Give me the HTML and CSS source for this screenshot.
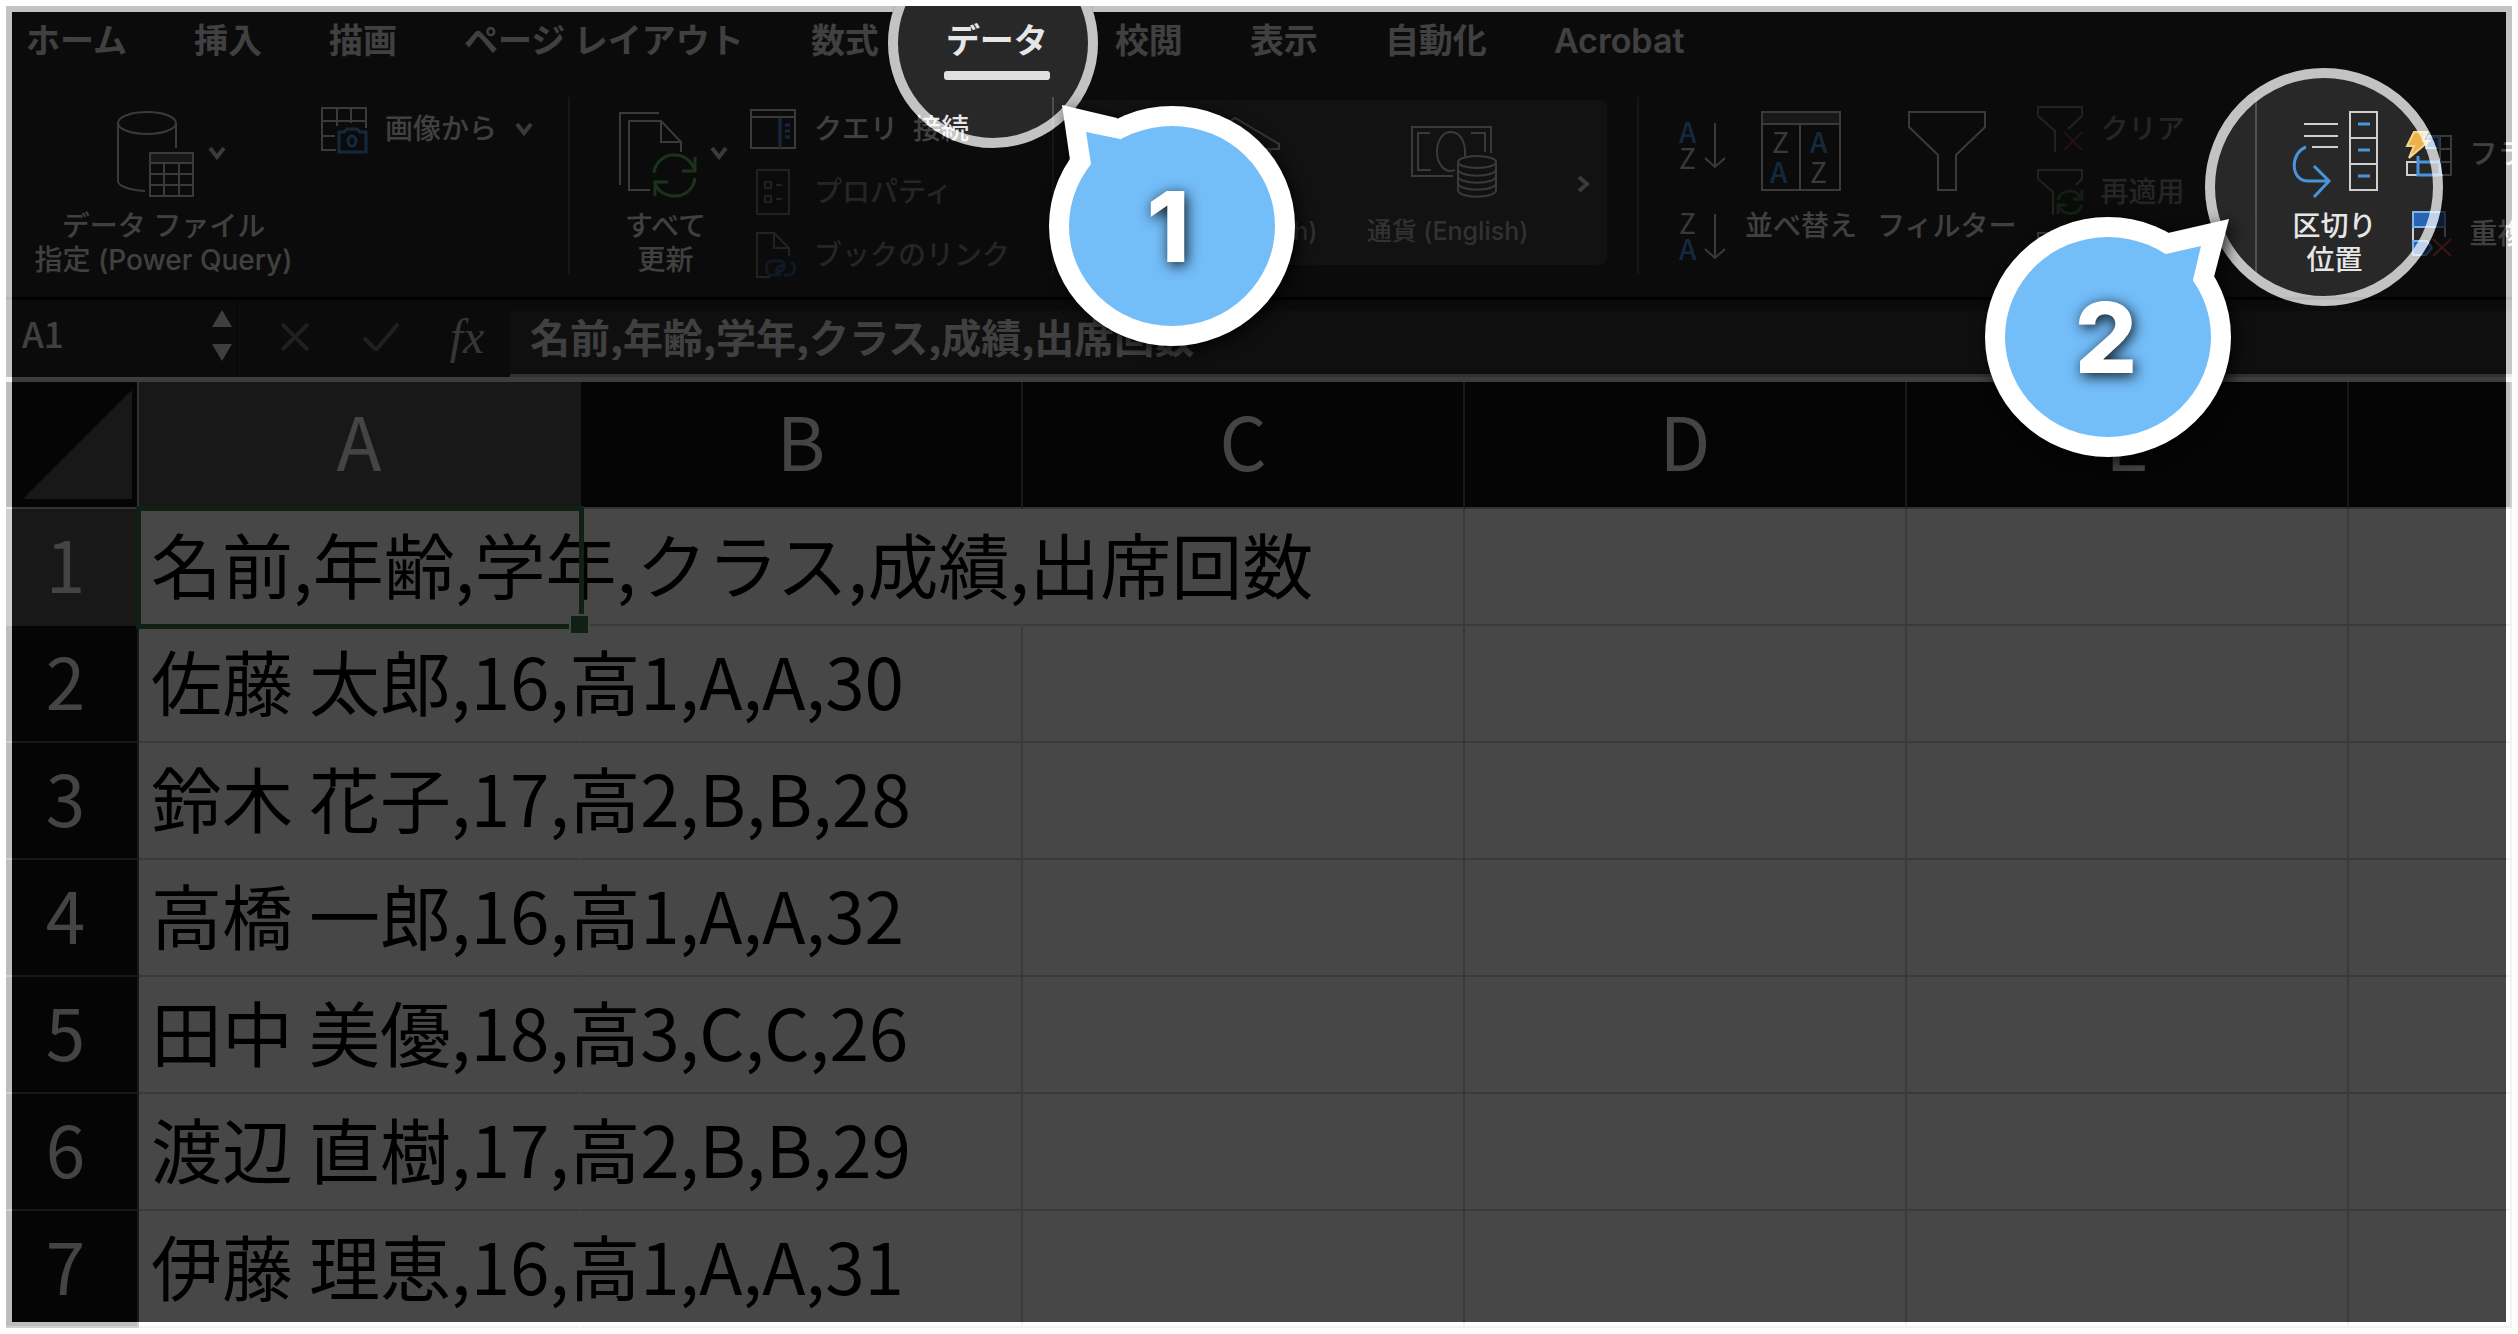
FILE: index.html
```html
<!DOCTYPE html>
<html lang="ja">
<head>
  <meta charset="UTF-8">
  <title>区切り位置</title>
  <link rel="stylesheet" href="styles.css">
</head>
<body>
  <div class="shot">
    <nav class="tabs">
      <button class="tab">ホーム</button>
      <button class="tab">挿入</button>
      <button class="tab">描画</button>
      <button class="tab">ページ レイアウト</button>
      <button class="tab">数式</button>
      <button class="tab active">データ</button>
      <button class="tab">校閲</button>
      <button class="tab">表示</button>
      <button class="tab">自動化</button>
      <button class="tab">Acrobat</button>
    </nav>

    <div class="ribbon">
      <!-- データの取得 -->
      <div class="group group-get">
        <button class="big">
          <span class="big-icon with-arrow">
            <svg width="77" height="86" viewBox="0 0 77 86">
              <ellipse cx="30" cy="12" rx="29" ry="11"/>
              <path d="M1 12V70C1 75 12 79 28 80M59 12V37"/>
              <path class="fill-gray" d="M33 42h43v10H33z"/>
              <path d="M33 52h43v33H33zM47 52v33M62 52v33M33 63h43M33 74h43"/>
            </svg>
            <svg class="arrow" width="18" height="14" viewBox="0 0 18 14"><path d="M2 2l7 9 7-9"/></svg>
          </span>
          <span class="big-label">データ ファイル<br>指定 (Power Query)</span>
        </button>
        <div class="list">
          <button class="small">
            <svg width="46" height="46" viewBox="0 0 46 46">
              <path d="M45 22V2H1v42h14M1 15h44M1 30h13M16 2v18M30 2v15"/>
              <path class="blue" d="M18 26h5l3-3h10l3 3h6v20H18z"/>
              <ellipse class="blue" cx="31" cy="35" rx="4" ry="5"/>
            </svg>
            <span>画像から</span>
            <svg class="arrow" width="18" height="14" viewBox="0 0 18 14"><path d="M2 2l7 9 7-9"/></svg>
          </button>
        </div>
      </div>

      <!-- クエリと接続 -->
      <div class="group group-wide">
        <button class="big">
          <span class="big-icon with-arrow">
            <svg width="77" height="86" viewBox="0 0 77 86">
              <path d="M40 2H1v72"/>
              <path d="M31 79H10V10h32l20 21v10M42 10v21h20"/>
              <path class="green" d="M35 62C36 51 46 43 56 44c10 0 16 6 20 15M76 46v14H63M76 67c-1 11-10 18-20 18S39 80 36 72M36 85V71h13"/>
            </svg>
            <svg class="arrow" width="18" height="14" viewBox="0 0 18 14"><path d="M2 2l7 9 7-9"/></svg>
          </span>
          <span class="big-label">すべて<br>更新</span>
        </button>
        <div class="list">
          <button class="small">
            <svg width="46" height="46" viewBox="0 0 46 46">
              <path d="M1 4h44v38H1zM1 11h44"/>
              <path class="blue" d="M30 12v30M35 19h5M35 25h5M35 31h5"/>
            </svg>
            <span>クエリ  接続</span>
          </button>
          <button class="small" disabled>
            <svg width="46" height="46" viewBox="0 0 46 46">
              <path d="M7 1h32v44H7zM15 13h6v6h-6zM15 27h6v6h-6zM26 16h6M26 30h6"/>
            </svg>
            <span>プロパティ</span>
          </button>
          <button class="small" disabled>
            <svg width="46" height="46" viewBox="0 0 46 46">
              <path d="M20 45H7V1h17l15 15v8M24 1v15h15"/>
              <path class="blue" d="M27 43h-6c-6 0-6-14 0-14h9c6 0 6 10 0 10h-4M34 43h5c7 0 7-12 2-12M31 43c-6 0-6-9 0-9h4"/>
            </svg>
            <span>ブックのリンク</span>
          </button>
        </div>
      </div>

      <!-- データの種類 -->
      <div class="group group-types">
        <div class="gallery">
          <button class="type">
            <svg width="86" height="72" viewBox="0 0 86 72">
              <path d="M1 18L41-8l44 26v5H1zM10 23v36M28 23v36M55 23v36M76 23v36M4 60h78v9H4z"/>
            </svg>
            <span>株式 (English)</span>
          </button>
          <button class="type">
            <svg width="86" height="72" viewBox="-6 0 86 72">
              <path d="M42 50H1V1h79v26M19 7H7v37h13M60 7h14v19"/>
              <path d="M44 44c-10 4-18-6-18-18S32 6 40 6c9 0 15 10 14 24"/>
              <ellipse cx="66" cy="36" rx="19" ry="6"/>
              <path d="M47 36v28c0 9 38 9 38 0V36M47 43c0 9 38 9 38 0M47 50c0 9 38 9 38 0M47 57c0 9 38 9 38 0"/>
            </svg>
            <span>通貨 (English)</span>
          </button>
          <button class="more" aria-label="その他">
            <svg class="arrow" width="12" height="18" viewBox="0 0 12 18"><path d="M2 2l8 7-8 7"/></svg>
          </button>
        </div>
      </div>

      <!-- 並べ替えとフィルター -->
      <div class="group group-sort">
        <div class="sorts">
          <button class="sort" aria-label="昇順">
            <svg width="46" height="46" viewBox="0 0 46 46">
              <text class="letter blue-letter" x="0" y="20">A</text>
              <text class="letter" x="0" y="46">Z</text>
              <path d="M36 0v44M26 35l10 9 10-9"/>
            </svg>
          </button>
          <button class="sort" aria-label="降順">
            <svg width="46" height="46" viewBox="0 0 46 46">
              <text class="letter" x="0" y="20">Z</text>
              <text class="letter blue-letter" x="0" y="46">A</text>
              <path d="M36 0v44M26 35l10 9 10-9"/>
            </svg>
          </button>
        </div>
        <button class="big">
          <span class="big-icon">
            <svg width="80" height="86" viewBox="0 0 80 86">
              <path class="fill-gray" d="M1 1h78v12H1z"/>
              <path d="M1 13h78v66H1zM39 13v66"/>
              <text class="letter" x="11" y="42">Z</text>
              <text class="letter blue-letter" x="49" y="42">A</text>
              <text class="letter blue-letter" x="9" y="72">A</text>
              <text class="letter" x="49" y="72">Z</text>
            </svg>
          </span>
          <span class="big-label">並べ替え</span>
        </button>
        <button class="big">
          <span class="big-icon">
            <svg width="78" height="86" viewBox="0 0 78 86">
              <path d="M1 1h76v15L48 44v35H30V44L1 16z"/>
            </svg>
          </span>
          <span class="big-label">フィルター</span>
        </button>
        <div class="list">
          <button class="small" disabled>
            <svg width="46" height="46" viewBox="0 0 46 46">
              <path d="M18 46V25L1 10V1h44v9L31 23"/>
              <path class="red" d="M27 26l18 18M45 26L27 44"/>
            </svg>
            <span>クリア</span>
          </button>
          <button class="small" disabled>
            <svg width="46" height="46" viewBox="0 0 46 46">
              <path d="M16 46V23L1 10V1h44v9l-6 6"/>
              <path class="green" d="M21 31c2-10 17-13 23-2M45 21v9h-9M45 36c-3 10-17 12-23 2M21 45v-9h9"/>
            </svg>
            <span>再適用</span>
          </button>
          <button class="small">
            <svg width="46" height="46" viewBox="0 0 46 46">
              <path d="M18 46V25L1 10V1h44v9L31 23"/>
            </svg>
            <span>詳細設定</span>
          </button>
        </div>
      </div>

      <!-- データ ツール -->
      <div class="group group-tools">
        <button class="big">
          <span class="big-icon">
            <svg width="86" height="86" viewBox="0 0 86 86">
              <path d="M12 13h34M12 25h34M20 36h26M58 1h27v78H58zM58 27h27M58 53h27"/>
              <path class="blue" d="M66 13h12M66 39h12M66 65h12M14 36C-2 42-2 70 16 70h21M22 55l15 15-15 16"/>
            </svg>
          </span>
          <span class="big-label">区切り<br>位置</span>
        </button>
        <div class="list tall">
          <button class="small">
            <svg width="46" height="46" viewBox="0 0 46 46">
              <path d="M22 5h23v39H1V31h44M34 5v39M34 18h11"/>
              <path class="fill-blue" d="M22 6h11v11H20z"/>
              <path class="blue" d="M12 25v19h22V31H12"/>
              <path class="bolt" d="M8 1h13l-4 9h6L3 27l5-12H1z"/>
            </svg>
            <span>フラ</span>
          </button>
          <button class="small">
            <svg width="46" height="46" viewBox="0 0 46 46">
              <path d="M7 16v14M39 16v10"/>
              <path class="fill-blue" d="M7 1h32v15H7zM7 30h14l5 7-6 7H7z"/>
              <path class="red" d="M27 28l18 17M45 28L27 45"/>
            </svg>
            <span>重複</span>
          </button>
        </div>
      </div>
    </div>

    <div class="formula-bar">
      <div class="name-box">
        <input type="text" class="name-input" value="A1" aria-label="名前ボックス">
        <div class="stepper">
          <button aria-label="上へ"><svg width="20" height="17" viewBox="0 0 20 17"><path d="M10 0l10 17H0z"/></svg></button>
          <button aria-label="下へ"><svg width="20" height="17" viewBox="0 0 20 17"><path d="M0 0h20L10 17z"/></svg></button>
        </div>
      </div>
      <div class="formula-actions">
        <button class="off" aria-label="キャンセル"><svg width="28" height="28" viewBox="0 0 28 28"><path d="M1 1l26 26M27 1L1 27"/></svg></button>
        <button class="off" aria-label="入力"><svg width="36" height="28" viewBox="0 0 36 28"><path d="M1 15l12 12L35 1"/></svg></button>
        <button class="fx">fx</button>
      </div>
      <input type="text" class="formula-input" value="名前,年齢,学年,クラス,成績,出席回数" aria-label="数式バー">
    </div>

    <table class="sheet">
      <colgroup>
        <col class="col-num">
        <col class="col-data"><col class="col-data"><col class="col-data"><col class="col-data"><col class="col-data">
        <col>
      </colgroup>
      <thead>
        <tr>
          <th class="corner"><svg width="109" height="109" viewBox="0 0 109 109"><path d="M109 0v109H0z"/></svg></th>
          <th class="current">A</th><th>B</th><th>C</th><th>D</th><th>E</th><th></th>
        </tr>
      </thead>
      <tbody>
        <tr><th class="current">1</th><td class="spill selected">名前,年齢,学年,クラス,成績,出席回数</td><td class="spill"></td><td></td><td></td><td></td><td></td></tr>
        <tr><th>2</th><td class="spill">佐藤 太郎,16,高1,A,A,30</td><td></td><td></td><td></td><td></td><td></td></tr>
        <tr><th>3</th><td class="spill">鈴木 花子,17,高2,B,B,28</td><td></td><td></td><td></td><td></td><td></td></tr>
        <tr><th>4</th><td class="spill">高橋 一郎,16,高1,A,A,32</td><td></td><td></td><td></td><td></td><td></td></tr>
        <tr><th>5</th><td class="spill">田中 美優,18,高3,C,C,26</td><td></td><td></td><td></td><td></td><td></td></tr>
        <tr><th>6</th><td class="spill">渡辺 直樹,17,高2,B,B,29</td><td></td><td></td><td></td><td></td><td></td></tr>
        <tr><th>7</th><td class="spill">伊藤 理恵,16,高1,A,A,31</td><td></td><td></td><td></td><td></td><td></td></tr>
      </tbody>
    </table>

    <!-- 暗幕と丸い切り抜き -->
    <svg class="spotlight">
      <mask id="holes">
        <rect width="100%" height="100%" fill="#fff"/>
        <circle cx="987" cy="37" r="105"/>
        <circle cx="2318" cy="181" r="119"/>
      </mask>
      <g mask="url(#holes)">
        <rect class="shade" x="6" y="6"/>
        <rect class="edge" width="100%" height="100%"/>
      </g>
      <circle class="ring" cx="987" cy="37" r="100"/>
      <circle class="ring" cx="2318" cy="181" r="114"/>
    </svg>

    <svg class="badge badge-1" width="260" height="260" viewBox="-130 -130 260 260">
      <g class="bubble">
        <ellipse rx="123" ry="120"/>
        <path d="M-110-121l55 13 5 40-40 20-12-18z"/>
      </g>
      <g class="bubble-inner">
        <ellipse rx="103" ry="100"/>
        <path d="M-86-94l34 7 2 30-25 10-6-15z"/>
      </g>
      <text x="-4" y="36">1</text>
    </svg>
    <svg class="badge badge-2" width="260" height="260" viewBox="-130 -130 260 260">
      <g class="bubble">
        <ellipse rx="123" ry="120"/>
        <path d="M121-118l-61 14-5 40 40 20 11-16z"/>
      </g>
      <g class="bubble-inner">
        <ellipse rx="103" ry="100"/>
        <path d="M93-91l-35 8-8 30 25 10 10-14z"/>
      </g>
      <text x="-2" y="36">2</text>
    </svg>
  </div>
</body>
</html>
```

FILE: styles.css
```css
* {
  box-sizing: border-box;
}
body {
  margin: 0;
  padding: 6px;
  background: #fff;
  font-family: Inter, "Noto Sans CJK JP", sans-serif;
}
button, input {
  font: inherit;
  color: inherit;
  background: none;
  border: none;
  padding: 0;
  margin: 0;
}
.shot {
  position: relative;
  overflow: hidden;
  background: #282828;
  color: #e6e6e6;
}

/* タブ */
.tabs {
  display: flex;
  gap: 67px;
  padding: 10px 0 0 20px;
}
.tab {
  font-size: 34px;
  line-height: 50px;
  font-weight: 600;
  white-space: nowrap;
  height: 64px;
  display: flex;
  flex-direction: column;
}
.active::after {
  content: "";
  height: 9px;
  margin: 5px -2px 0;
  border-radius: 3px;
  background: #e0e0e0;
}

/* リボン */
.ribbon {
  display: flex;
  padding: 17px 0 23px;
  border-bottom: 3px solid #000;
  font-size: 28px;
  line-height: 34px;
  font-weight: 500;
  white-space: nowrap;
}
.ribbon svg {
  flex: none;
  fill: none;
  stroke: #cfcfcf;
  stroke-width: 2;
  overflow: visible;
}
.ribbon svg .blue {
  stroke: #4a94dc;
  stroke-width: 3;
}
.ribbon svg .green {
  stroke: #62b562;
  stroke-width: 3;
}
.ribbon svg .red {
  stroke: #d8504c;
}
.ribbon svg .fill-gray {
  fill: #565656;
}
.ribbon svg .fill-blue {
  fill: #2a62b4;
  stroke: #7db4ec;
}
.ribbon svg .bolt {
  fill: #eeb24c;
  stroke: #f6d68c;
}
.ribbon .arrow {
  stroke-width: 4;
}
.ribbon .letter {
  font-family: "Noto Sans CJK JP", sans-serif;
  font-size: 28px;
  font-weight: 400;
  fill: #cfcfcf;
  stroke: none;
}
.ribbon .blue-letter {
  fill: #4a94dc;
  font-weight: 500;
}
.group {
  flex: none;
  display: flex;
  align-items: flex-start;
  gap: 22px;
  height: 177px;
  border-right: 2px solid #505050;
}
.group-get {
  padding: 0 35px 0 22px;
}
.group-get .big {
  min-width: 271px;
}
.group-wide {
  padding: 0 42px 0 33px;
}
.group-types {
  padding: 3px 30px 0 22px;
}
.group-sort {
  padding: 0 42px 0 40px;
  gap: 20px;
}
.group-tools {
  padding-left: 35px;
  gap: 28px;
  border-right: none;
}
.big {
  display: flex;
  flex-direction: column;
  align-items: center;
  gap: 12px;
  padding-top: 14px;
}
.big-icon {
  display: flex;
  gap: 14px;
}
.with-arrow {
  padding-left: 16px;
}
.with-arrow .arrow {
  margin-top: 35px;
}
.list {
  display: flex;
  flex-direction: column;
}
.small {
  display: flex;
  align-items: center;
  gap: 18px;
  height: 63px;
  white-space: pre;
}
.small:disabled {
  color: #858585;
}
.small:disabled svg {
  opacity: 0.5;
}
.tall {
  padding-top: 17px;
}
.tall .small {
  height: 80px;
}
.gallery {
  display: flex;
  height: 165px;
  padding: 0 18px 0 55px;
  border-radius: 8px;
  background: #404040;
}
.type {
  width: 211px;
  display: flex;
  flex-direction: column;
  align-items: center;
  gap: 17px;
  padding-top: 26px;
  font-size: 25px;
  line-height: 32px;
  color: #b0b0b0;
}
.more {
  margin-left: 24px;
}
.sorts {
  display: flex;
  flex-direction: column;
  gap: 45px;
  padding-top: 26px;
}
.sort {
  display: flex;
}

/* 数式バー */
.formula-bar {
  display: flex;
  height: 82px;
  border-bottom: 5px solid #dcdcdc;
}
.name-box {
  width: 232px;
  display: flex;
  align-items: center;
  justify-content: space-between;
  padding: 0 4px 6px 16px;
  border-right: 2px solid #1e1e1e;
}
.name-input {
  width: 150px;
  padding-bottom: 6px;
  font-family: "Noto Sans CJK JP", sans-serif;
  font-size: 35px;
  font-weight: 500;
  line-height: 50px;
}
.stepper {
  display: flex;
  flex-direction: column;
  gap: 17px;
}
.stepper button {
  display: flex;
}
.stepper svg {
  fill: #e0e0e0;
}
.formula-actions {
  display: flex;
  padding-left: 14px;
}
.formula-actions button {
  width: 86px;
}
.formula-actions svg {
  fill: none;
  stroke: #747474;
  stroke-width: 4;
}
.formula-actions .fx {
  padding-bottom: 4px;
  font-family: "Liberation Serif", serif;
  font-style: italic;
  font-size: 48px;
  color: #c0c0c0;
}
.formula-input {
  flex: 1;
  padding: 0 20px 14px;
  background: #363636;
  border-top: 11px solid #282828;
  border-bottom: 3px solid #b0b0b0;
  font-family: "Noto Sans CJK JP", sans-serif;
  font-size: 40px;
  font-weight: 600;
  line-height: 48px;
}

/* シート */
.sheet {
  width: 100%;
  table-layout: fixed;
  border-collapse: separate;
  border-spacing: 0;
  font-family: "Noto Sans CJK JP", sans-serif;
  font-size: 71px;
  line-height: 80px;
}
.col-num {
  width: 133px;
}
.col-data {
  width: 442px;
}
.sheet th {
  height: 117px;
  padding: 0 0 10px;
  font-weight: 400;
  background: #121212;
  color: #f4f4f4;
  border-right: 2px solid #565656;
  border-bottom: 2px solid #565656;
}
.sheet thead th {
  height: 127px;
  padding-bottom: 12px;
  font-size: 74px;
  border-bottom-color: #b8b8b8;
}
.sheet tbody th {
  padding-right: 12px;
}
.sheet .current {
  background: #585858;
}
.sheet thead .corner {
  padding: 0 5px 0 0;
  border-right-color: #b0b0b0;
}
.corner svg {
  display: block;
  margin-left: auto;
  fill: #585858;
}
.sheet td {
  height: 117px;
  padding: 0 0 10px 12px;
  background: #fff;
  color: #000;
  white-space: nowrap;
  border-right: 2px solid #d0d0d0;
  border-bottom: 2px solid #d0d0d0;
}
.sheet .spill {
  border-right-color: #fff;
}
.selected {
  position: relative;
}
/* 選択枠 */
.selected::before {
  content: "";
  position: absolute;
  inset: -3px -5px -5px -3px;
  border: 5px solid #3f7549;
}
.selected::after {
  content: "";
  position: absolute;
  right: -11px;
  bottom: -11px;
  width: 17px;
  height: 17px;
  background: #3f7549;
  border: 2px solid #fff;
}

/* 説明用の重ね表示 */
.spotlight {
  position: absolute;
  inset: 0;
  width: 100%;
  height: 100%;
}
.shade {
  width: calc(100% - 12px);
  height: calc(100% - 12px);
  fill: rgba(0, 0, 0, 0.72);
}
.edge {
  fill: none;
  stroke: rgba(255, 255, 255, 0.72);
  stroke-width: 12;
}
.ring {
  fill: none;
  stroke: rgba(255, 255, 255, 0.72);
  stroke-width: 10;
}
.badge {
  position: absolute;
  overflow: visible;
}
.badge-1 {
  left: 1036px;
  top: 90px;
}
.badge-2 {
  left: 1972px;
  top: 201px;
}
.bubble {
  fill: #fff;
  filter: drop-shadow(4px 4px 8px rgba(0, 0, 0, 0.8));
}
.bubble-inner {
  fill: #73bdf9;
}
.badge text {
  font-family: Inter, sans-serif;
  font-size: 98px;
  font-weight: 800;
  fill: #fff;
  text-anchor: middle;
  filter: drop-shadow(2px 3px 7px rgba(0, 0, 0, 0.9));
}
```
